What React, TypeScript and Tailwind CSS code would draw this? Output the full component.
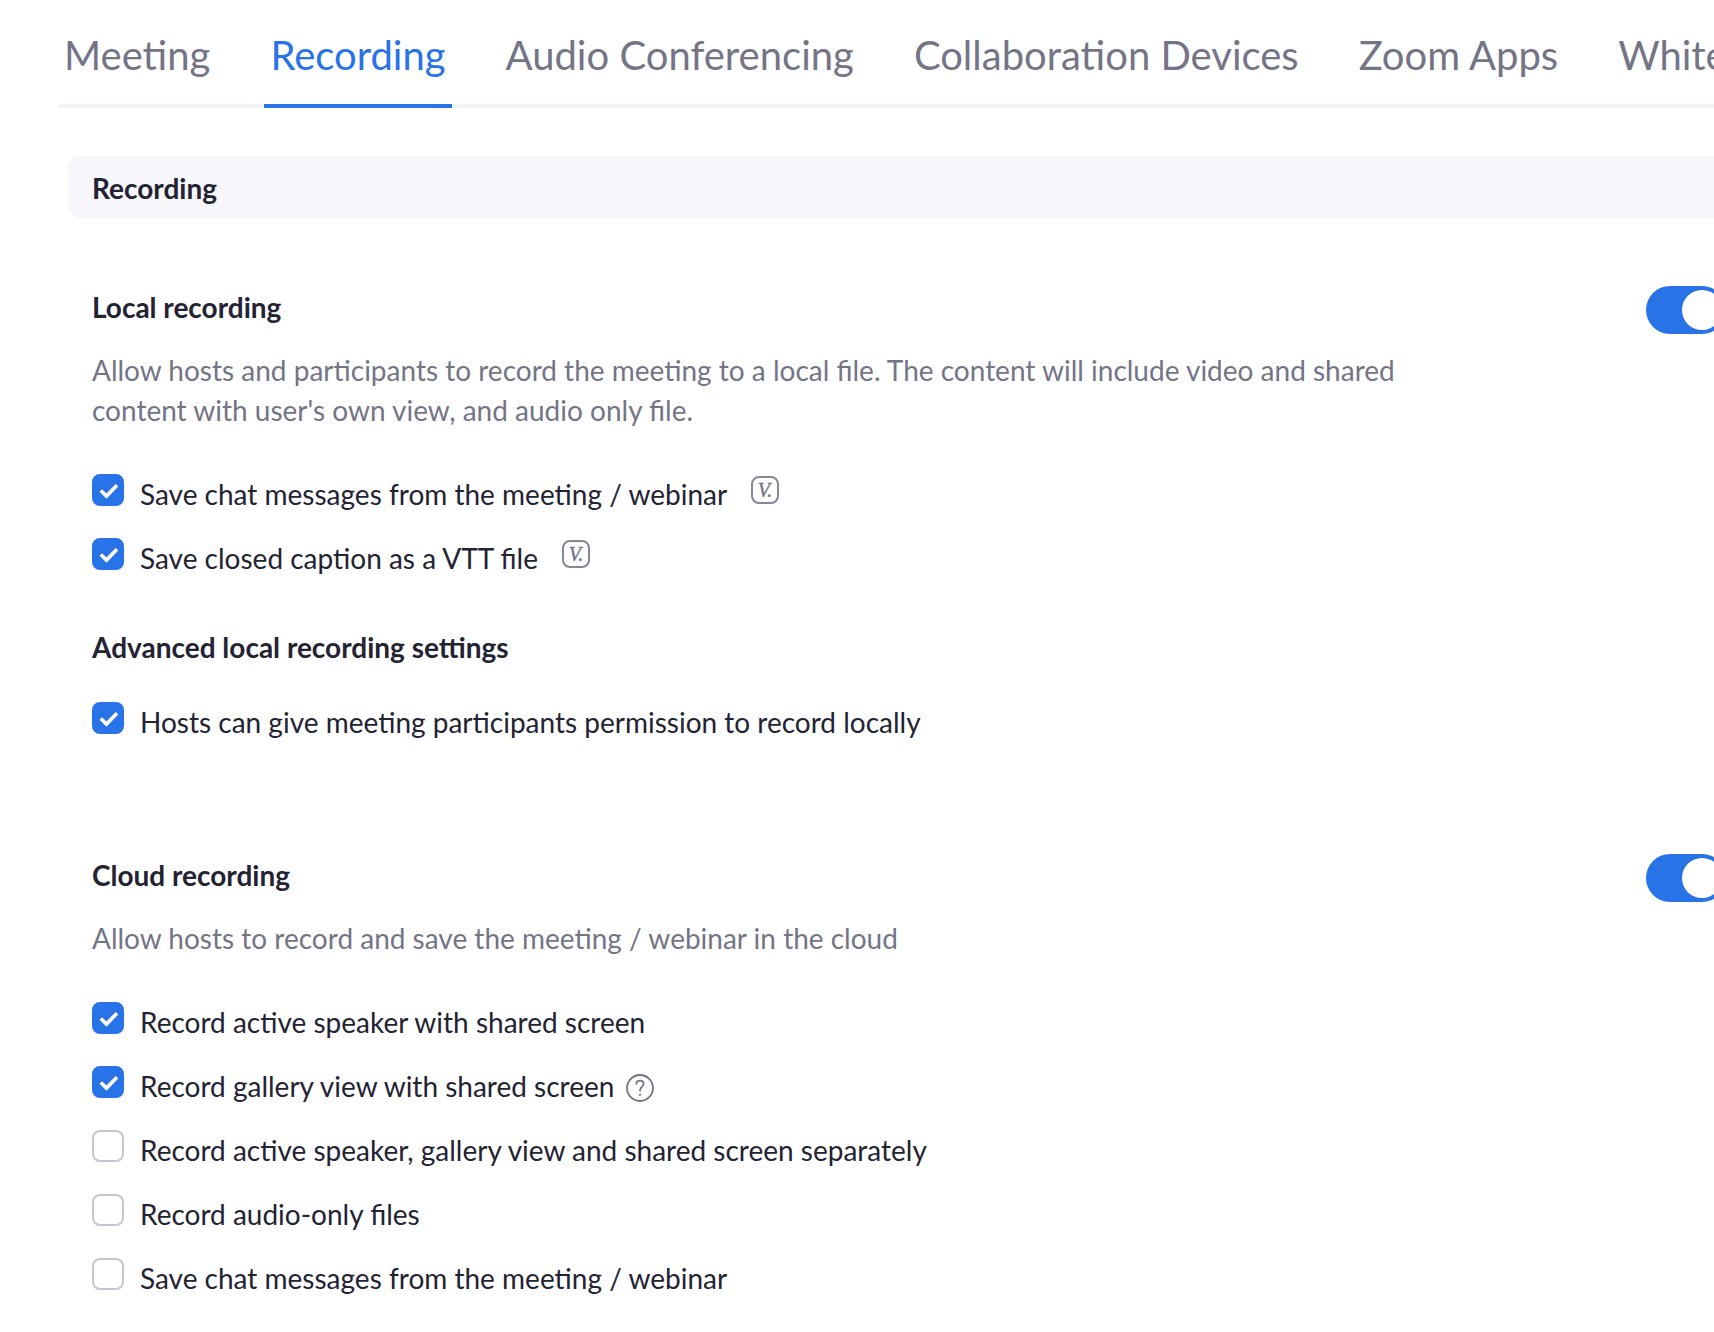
import React, { useId, useState } from 'react';

const tabs = [
  'Meeting',
  'Recording',
  'Audio Conferencing',
  'Collaboration Devices',
  'Zoom Apps',
  'Whiteboard',
];

function Toggle({ label, defaultOn }: { label: string; defaultOn?: boolean }) {
  const [on, setOn] = useState(!!defaultOn);

  return (
    <button
      type="button"
      role="switch"
      aria-checked={on}
      aria-label={label}
      onClick={() => setOn(!on)}
      className={`-mr-3 flex h-12 w-20 shrink-0 items-center rounded-full p-1 ${
        on ? 'justify-end bg-[#2873e8]' : 'justify-start bg-[#babacc]'
      }`}
    >
      <span className="size-10 rounded-full bg-white" />
    </button>
  );
}

function VersionIcon() {
  return (
    <svg viewBox="0 0 28 28" className="ml-6 mt-[2px] size-7 shrink-0" aria-hidden="true">
      <rect x="1" y="1" width="26" height="26" rx="7" fill="none" stroke="#85859b" strokeWidth="2" />
      <text
        x="14"
        y="20.5"
        textAnchor="middle"
        fill="#747487"
        stroke="#747487"
        strokeWidth="0.4"
        className="font-['Liberation_Serif',serif] text-[20px] italic"
      >
        V.
      </text>
    </svg>
  );
}

function HelpIcon() {
  return (
    <svg
      viewBox="0 0 28 28"
      className="ml-3 mt-2 size-7 shrink-0"
      fill="none"
      stroke="#747487"
      strokeLinecap="round"
      strokeLinejoin="round"
      aria-hidden="true"
    >
      <circle cx="14" cy="14" r="13" strokeWidth="1.8" />
      <path d="M10.4 9.8c0-2 1.6-3.2 3.6-3.2s3.6 1.2 3.6 3.2c0 2.8-3.6 3.2-3.6 6.8" strokeWidth="1.8" />
      <circle cx="14" cy="20.8" r="0.5" strokeWidth="1.2" />
    </svg>
  );
}

function Option({
  label,
  defaultChecked,
  icon,
}: {
  label: string;
  defaultChecked?: boolean;
  icon?: React.ReactNode;
}) {
  const id = useId();
  const [checked, setChecked] = useState(!!defaultChecked);

  return (
    <div className="flex items-start">
      <span className="relative mr-4 size-8 shrink-0">
        <input
          id={id}
          type="checkbox"
          checked={checked}
          onChange={(e) => setChecked(e.target.checked)}
          className="block size-8 appearance-none rounded-lg border-2 border-[#c4c4d6] bg-white checked:border-[#2873e8] checked:bg-[#2873e8]"
        />
        {checked && (
          <svg viewBox="0 0 32 32" className="pointer-events-none absolute inset-0 size-8" aria-hidden="true">
            <path d="M8.8 16.4l5.7 5.7L25 11.2" fill="none" stroke="#fff" strokeWidth="3.6" />
          </svg>
        )}
      </span>
      <label htmlFor={id} className="text-[28px] leading-10">
        {label}
      </label>
      {icon}
    </div>
  );
}

export default function App() {
  const [active, setActive] = useState('Recording');

  return (
    <div className="min-h-screen overflow-hidden bg-white pb-6 font-[Lato,sans-serif] text-[#232333]">
      <nav className="ml-[58px] mt-7 flex gap-12 border-b-4 border-[#f3f3fa]">
        {tabs.map((tab) => (
          <button
            key={tab}
            type="button"
            onClick={() => setActive(tab)}
            className={`-mb-1 shrink-0 whitespace-nowrap border-b-4 px-1.5 pb-[22px] text-[40px] leading-[54px] ${
              tab === active ? 'border-[#2873e8] text-[#2873e8]' : 'border-transparent text-[#747487]'
            }`}
          >
            {tab}
          </button>
        ))}
      </nav>

      <main className="ml-[68px] mt-12">
        <h2 className="rounded-l-xl bg-[#f6f6fb] px-6 pb-[10px] pt-3 text-[28px] font-bold leading-10">
          Recording
        </h2>

        <section className="mt-[68px] flex items-start justify-between pl-6">
          <div>
            <h3 className="text-[28px] font-bold leading-[42px]">Local recording</h3>
            <p className="mt-[22px] max-w-[1320px] text-[28px] leading-10 text-[#747487]">
              Allow hosts and participants to record the meeting to a local file. The content will include video and
              shared content with user's own view, and audio only file.
            </p>
            <div className="mt-11 flex flex-col gap-6">
              <Option label="Save chat messages from the meeting / webinar" defaultChecked icon={<VersionIcon />} />
              <Option label="Save closed caption as a VTT file" defaultChecked icon={<VersionIcon />} />
            </div>
            <h4 className="mt-12 text-[28px] font-bold leading-[42px]">Advanced local recording settings</h4>
            <div className="mt-[34px] flex flex-col gap-6">
              <Option label="Hosts can give meeting participants permission to record locally" defaultChecked />
            </div>
          </div>
          <Toggle label="Local recording" defaultOn />
        </section>

        <section className="mt-28 flex items-start justify-between pl-6">
          <div>
            <h3 className="text-[28px] font-bold leading-[42px]">Cloud recording</h3>
            <p className="mt-[22px] text-[28px] leading-10 text-[#747487]">
              Allow hosts to record and save the meeting / webinar in the cloud
            </p>
            <div className="mt-11 flex flex-col gap-6">
              <Option label="Record active speaker with shared screen" defaultChecked />
              <Option label="Record gallery view with shared screen" defaultChecked icon={<HelpIcon />} />
              <Option label="Record active speaker, gallery view and shared screen separately" />
              <Option label="Record audio-only files" />
              <Option label="Save chat messages from the meeting / webinar" />
            </div>
          </div>
          <Toggle label="Cloud recording" defaultOn />
        </section>
      </main>
    </div>
  );
}
